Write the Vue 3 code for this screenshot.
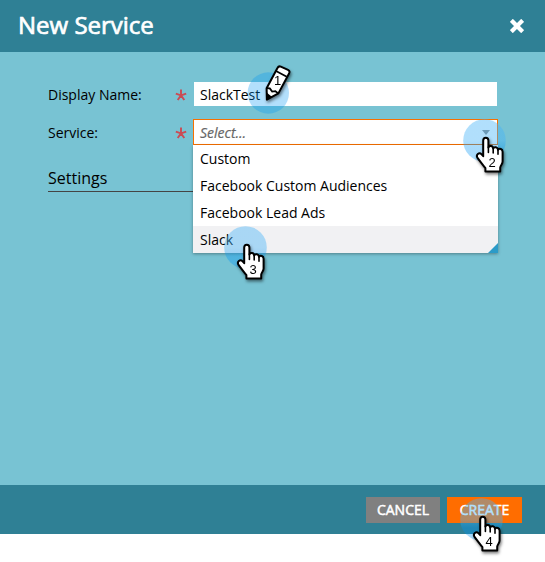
<script setup>
const options = ['Custom', 'Facebook Custom Audiences', 'Facebook Lead Ads', 'Slack']
const steps = [
  { n: 2, x: 463, y: 119 },
  { n: 3, x: 224, y: 226 },
  { n: 4, x: 460, y: 498 },
]
</script>

<template>
  <div class="stage">
    <div class="dialog">
      <header class="head">
        <h1>New Service</h1>
        <svg class="close" width="14" height="14" viewBox="0 0 14 14"><path d="M2.8 2.8L11.2 11.2M11.2 2.8L2.8 11.2" stroke="#fff" stroke-width="4.2" stroke-linecap="square" stroke-linejoin="round" /></svg>
      </header>
      <main class="body">
        <div class="row">
          <label>Display Name:</label>
          <svg class="star" width="12" height="12" viewBox="0 0 12 12"><path d="M6 6.4V.6M6 6.4L.8 4.6M6 6.4L11.2 4.6M6 6.4L2.7 11M6 6.4L9.3 11" /></svg>
          <div class="input">SlackTest</div>
        </div>
        <div class="row second">
          <label>Service:</label>
          <svg class="star" width="12" height="12" viewBox="0 0 12 12"><path d="M6 6.4V.6M6 6.4L.8 4.6M6 6.4L11.2 4.6M6 6.4L2.7 11M6 6.4L9.3 11" /></svg>
          <div class="select">
            <span>Select...</span>
            <i class="arrow"></i>
            <ul class="menu">
              <li v-for="o in options" :key="o" :class="{ active: o === 'Slack' }">{{ o }}</li>
            </ul>
          </div>
        </div>
        <h2>Settings</h2>
      </main>
      <footer class="foot">
        <button class="cancel">CANCEL</button>
        <button class="create">CREATE</button>
      </footer>
    </div>

    <div class="mark" :style="{ left: '247px', top: '72px' }">
      <svg width="60" height="60" viewBox="0 0 60 60">
        <circle cx="21.3" cy="21" r="20.7" class="halo" />
        <g class="pen">
          <path d="M19.6 16.2L30.6 -4.2Q31.6 -6.2 33.8 -5.4L41 -2.2Q43.2 -1 42.2 1.2L31.4 21.4L19.9 27.6Z" fill="#fff" stroke="#000" stroke-width="2" stroke-linejoin="round" />
          <path d="M29 -1L39.8 4.8M19.6 16.2L22.8 16.4L25.2 19.6L28.4 19.2L31.2 21.4" fill="none" stroke="#000" stroke-width="1.8" />
          <path d="M19.6 20.5L25.2 25L19.6 28Z" />
          <text x="30.6" y="13.2">1</text>
        </g>
      </svg>
    </div>
    <div v-for="s in steps" :key="s.n" class="mark" :style="{ left: s.x + 'px', top: s.y + 'px' }">
      <svg width="60" height="60" viewBox="0 0 60 60">
        <defs>
          <linearGradient :id="'tint' + s.n" x1="0" y1="0" x2="0" y2="1">
            <stop offset=".5" stop-color="#45b3f8" stop-opacity=".42" />
            <stop offset=".7" stop-color="#0094f5" stop-opacity=".34" />
          </linearGradient>
        </defs>
        <circle cx="21.5" cy="21.5" r="21.3" :fill="`url(#tint${s.n})`" />
        <g class="pen">
          <path d="M20.2 37.2L20.2 21.6C20.2 17.8 25.4 17.8 25.4 21.6V28.6C26 26.2 30 26.4 30.2 29.4C31.2 27.4 34.8 27.9 35 30.8C36.4 29 39.6 29.8 39.6 32.8V42.6C39.6 45.4 37.4 46.3 37.2 48.7V52.4H22.4V49.2C20.2 46.2 17.3 42.7 14.7 39.2C12.3 35.9 16.2 32.8 18.6 35.4Z" fill="#fff" stroke="#000" stroke-width="2" stroke-linejoin="round" />
          <path d="M25.4 28V33.5M30.2 29V34M35 31V35.2" stroke="#000" stroke-width="1.6" stroke-linecap="round" />
          <text x="29" y="48">{{ s.n }}</text>
        </g>
      </svg>
    </div>
  </div>
</template>

<style>
body { background: #fff; }
</style>

<style scoped>
.stage { position: relative; width: 545px; height: 562px; overflow: hidden; font: 14px/20px "Open Sans", "Noto Sans", sans-serif; color: #000; }
.dialog { height: 534px; display: flex; flex-direction: column; }
.head { height: 52px; box-sizing: border-box; background: #2f8095; display: flex; align-items: center; justify-content: space-between; padding: 0 21px 0 18px; }
h1 { margin: 0 0 2px; color: #fff; font-size: 24px; line-height: 32px; font-weight: 400; -webkit-text-stroke: .7px #fff; }
.body { flex: 1; background: #78c3d3; padding: 30px 47px 0 48px; }
.row { display: flex; align-items: center; height: 24px; }
.second { margin-top: 14px; }
label { width: 127px; padding-top: 2px; }
.star { margin-right: 7px; margin-top: 2px; fill: none; stroke: #cb4b54; stroke-width: 1.9; }
.input { width: 303px; height: 24px; box-sizing: border-box; background: #fff; padding: 3px 6px 1px; }
.select { position: relative; width: 305px; height: 26px; margin-left: -1px; flex: none; box-sizing: border-box; border: 1px solid #f77000; background: #fff; display: flex; align-items: center; justify-content: space-between; padding: 0 7px 0 6px; }
.select span { font-style: italic; color: #666; padding-top: 2px; -webkit-text-stroke: .2px #666; }
.arrow { border: 4.5px solid transparent; border-top: 5px solid #888; border-bottom: 0; }
.menu { position: absolute; left: -1px; top: 25px; width: 305px; margin: 0; padding: 0; list-style: none; background: #fff; box-shadow: 0 1px 3px rgba(0, 0, 0, .35); z-index: 1; }
.menu::after { content: ""; position: absolute; right: 0; bottom: 0; border-left: 10px solid transparent; border-bottom: 10px solid #2b9bc8; }
.menu li { height: 27px; line-height: 27px; padding-left: 7px; }
.menu .active { background: #f1f1f3; }
h2 { margin: 22px 0 0; height: 25px; font-size: 16px; line-height: 25px; font-weight: 400; border-bottom: 1px solid #444; }
.foot { height: 49px; background: #2f8095; display: flex; align-items: center; justify-content: flex-end; gap: 7px; padding-right: 23px; }
button { height: 26px; border: 0; padding: 0; font: 14px/26px "Open Sans", "Noto Sans", sans-serif; color: #fff; -webkit-text-stroke: .5px #fff; }
.cancel { width: 74px; background: #808080; }
.create { width: 75px; background: #ff6d00; }
.mark { position: absolute; z-index: 2; width: 60px; height: 60px; }
.mark svg { display: block; overflow: visible; }
.halo { fill: rgba(0, 148, 245, .3); }
.pen { filter: drop-shadow(1px 2px 1.5px rgba(0, 0, 0, .5)); }
.pen text { font: 13px "Liberation Sans", Arial, sans-serif; text-anchor: middle; fill: #000; }
</style>
